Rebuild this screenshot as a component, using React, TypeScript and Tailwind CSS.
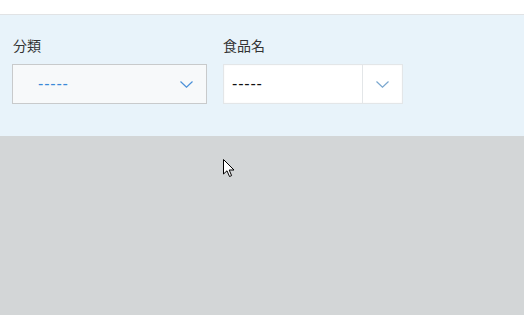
import React from "react";

function Chevron({ color }: { color: string }) {
  return (
    <svg width="13" height="7" viewBox="0 0 13 7" fill="none">
      <path d="M0.5 0.5 L6.5 6.2 L12.5 0.5" stroke={color} strokeWidth="1.2" />
    </svg>
  );
}

export default function App() {
  return (
    <div
      className="relative w-[524px] h-[315px] bg-[#d3d6d7] overflow-hidden"
      style={{ fontFamily: '"Noto Sans CJK JP", "Noto Sans", sans-serif' }}
    >
      <div className="h-[14px] bg-white" />
      <div className="h-[122px] bg-[#e8f3fa] border-t border-[#e1e3e5] flex gap-[16px] pl-[12px] pt-[20px]">
        <div className="flex flex-col">
          <div className="text-[14px] leading-[20px] text-[#333] pl-[1px]">分類</div>
          <div className="mt-[9px] w-[195px] h-[40px] bg-[#f7f9fa] border border-[#c8cacb] flex items-center justify-between pl-[25px] pr-[13px]">
            <span className="text-[16px] leading-[20px] text-[#3a8ad8] tracking-[0.8px] font-['Liberation_Sans',sans-serif]">-----</span>
            <Chevron color="#4a90d9" />
          </div>
        </div>
        <div className="flex flex-col">
          <div className="text-[14px] leading-[20px] text-[#333]">食品名</div>
          <div className="mt-[9px] w-[180px] h-[40px] bg-white border border-[#e3e6e8] shadow-[inset_0_0_2px_rgba(0,0,0,0.06)] flex">
            <div className="flex-1 flex items-center pl-[8px]">
              <span className="text-[16px] leading-[20px] text-[#111] tracking-[0.8px] font-['Liberation_Sans',sans-serif]">-----</span>
            </div>
            <div className="w-[40px] border-l border-[#e3e6e8] flex items-center justify-center">
              <Chevron color="#7aa7cf" />
            </div>
          </div>
        </div>
      </div>
      <svg
        className="absolute left-[223px] top-[159px]"
        width="12"
        height="19"
        viewBox="0 0 12 19"
      >
        <path
          d="M0.5 0.5 L0.5 15 L4 11.8 L6.5 17.5 L8.6 16.6 L6.2 11 L11 11 Z"
          fill="white"
          stroke="black"
          strokeWidth="1"
          strokeLinejoin="round"
        />
      </svg>
    </div>
  );
}
